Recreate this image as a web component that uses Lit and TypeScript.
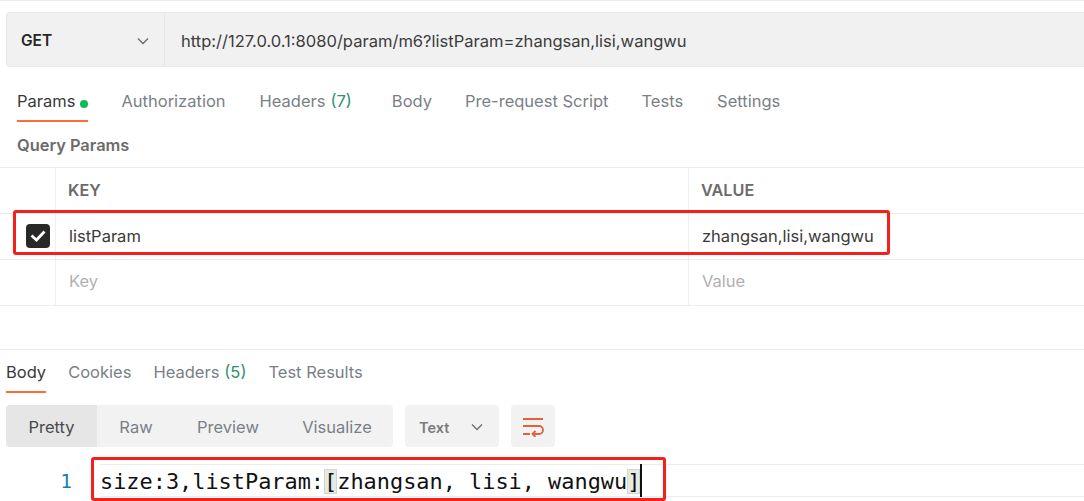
import { LitElement, html, css } from "lit";
import { customElement } from "lit/decorators.js";

const chevron = html`<svg class="chev" width="14" height="14" viewBox="0 0 14 14" fill="none"><path d="M2 4.5 7 9.5 12 4.5" stroke="#6b6b6b" stroke-width="1.3"/></svg>`;

@customElement("app-root")
export class AppRoot extends LitElement {
  static styles = css`
    :host { display: block; width: 1084px; height: 501px; overflow: hidden; background: #fff; font-family: Inter, "Liberation Sans", sans-serif; color: #3a3a3a; position: relative; }
    .top { border-top: 1px solid #ececec; padding: 11px 0 0 6px; }
    .urlbar { height: 55px; box-sizing: border-box; display: flex; align-items: center; background: #f1f1f1; border: 1px solid #e8e8e8; border-right: 0; border-radius: 4px 0 0 4px; }
    .method { width: 158px; height: 100%; box-sizing: border-box; border-right: 1px solid #e6e6e6; display: flex; align-items: center; justify-content: space-between; padding: 2px 14px 0 14px; font-weight: 600; font-size: 15.5px; color: #262626; }
    .url { padding: 2px 0 0 16px; font-size: 16.55px; color: #3c3c3c; white-space: nowrap; }
    .tabs { display: flex; font-size: 16.5px; color: #7a7f86; }
    .reqtabs { padding: 22px 0 0 17px; height: 33px; gap: 33px; }
    .tab { white-space: nowrap; display: flex; gap: 5px; height: 33px; line-height: 24px; box-sizing: border-box; }
    .tab.on { color: #3a3a3a; border-bottom: 2px solid #ff6c37; }
    .reqtabs .auth { margin-right: 1px; }
    .reqtabs .hdr { margin-right: 7px; }
    .reqtabs .tests { margin-right: 1px; }
    .dot { width: 8px; height: 8px; border-radius: 50%; background: #0cbb52; align-self: center; margin-bottom: 1px; }
    .count { color: #2f8f6f; }
    .qp { padding: 11px 0 0 17px; height: 45px; box-sizing: border-box; line-height: 24px; font-size: 16.4px; font-weight: 600; color: #6b6b6b; }
    .row { display: grid; grid-template-columns: 55px 633px 1fr; height: 46px; border-top: 1px solid #ececec; box-sizing: border-box; align-items: center; font-size: 16.5px; }
    .row > div { height: 100%; display: flex; align-items: center; box-sizing: border-box; padding-bottom: 2px; }
    .row > div + div { border-left: 1px solid #efefef; padding-left: 13px; }
    .row.h { font-weight: 600; color: #6b6b6b; font-size: 16.2px; }
    .row.h > div + div { padding-left: 12px; }
    .row.last { height: 47px; border-bottom: 1px solid #ececec; }
    .row.last > div { padding-bottom: 4px; }
    .ph { color: #b0b0b0; }
    .check { width: 24px; height: 24px; margin-left: 26px; border-radius: 4px; background: #282828; display: flex; align-items: center; justify-content: center; }
    .res { margin-top: 43px; border-top: 1px solid #ececec; }
    .restabs { padding: 10px 0 0 6px; gap: 22px; height: 33px; }
    .tools { display: flex; padding: 12px 0 0 6px; height: 42px; }
    .seg { width: 387px; height: 42px; background: #f2f2f2; border-radius: 4px; display: flex; overflow: hidden; font-size: 16.5px; color: #7a7f86; }
    .seg div { display: flex; align-items: center; justify-content: center; padding-top: 2px; box-sizing: border-box; }
    .seg .p { width: 91px; background: #e6e6e6; color: #4a4a4a; }
    .seg .r { width: 78px; }
    .seg .v { width: 106px; }
    .seg .z { width: 112px; }
    .fmt { margin-left: 12px; width: 94px; height: 42px; box-sizing: border-box; padding: 2px 15px 0 14px; background: #f2f2f2; border-radius: 4px; display: flex; align-items: center; justify-content: space-between; font-size: 14.5px; font-weight: 600; color: #7a7a7a; }
    .wrap { margin-left: 12px; width: 44px; height: 42px; background: #f2f2f2; border-radius: 4px; display: flex; align-items: center; justify-content: center; }
    .code { display: flex; align-items: center; margin-top: 17px; height: 33px; font-family: "DejaVu Sans Mono", "Liberation Mono", monospace; font-size: 21.9px; color: #111; }
    .ln { width: 72px; text-align: right; color: #1d7fa6; font-size: 19.5px; font-family: "DejaVu Sans Mono", monospace; padding-top: 2px; }
    .line { margin-left: 28px; flex: 1; height: 33px; box-sizing: border-box; border-top: 1px solid #ececec; border-bottom: 1px solid #ececec; display: flex; align-items: center; white-space: pre; line-height: 31px; }
    .txt { position: relative; top: 1px; }
    .br { background: #e3ebe3; outline: 1px solid #cfd8cf; outline-offset: -1px; }
    .caret { display: inline-block; width: 2px; height: 33px; background: #111; }
    .red { position: absolute; box-sizing: border-box; border: 3px solid #f5201a; border-radius: 3px; pointer-events: none; }
    .r1 { left: 13px; top: 210px; width: 877px; height: 45px; }
    .r2 { left: 91px; top: 457px; width: 575px; height: 44px; }
  `;
  render() {
    return html`
      <div class="top">
        <div class="urlbar">
          <div class="method">GET ${chevron}</div>
          <div class="url">http://127.0.0.1:8080/param/m6?listParam=zhangsan,lisi,wangwu</div>
        </div>
      </div>
      <div class="tabs reqtabs">
        <div class="tab on">Params <span class="dot"></span></div>
        <div class="tab auth">Authorization</div>
        <div class="tab hdr">Headers <span class="count">(7)</span></div>
        <div class="tab">Body</div>
        <div class="tab">Pre-request Script</div>
        <div class="tab tests">Tests</div>
        <div class="tab">Settings</div>
      </div>
      <div class="qp">Query Params</div>
      <div class="row h"><div></div><div>KEY</div><div>VALUE</div></div>
      <div class="row"><div><span class="check"><svg width="16" height="14" viewBox="0 0 16 14" fill="none"><path d="M1.5 6.5 6.5 11 14.5 2.5" stroke="#fff" stroke-width="2.8"/></svg></span></div><div>listParam</div><div>zhangsan,lisi,wangwu</div></div>
      <div class="row last"><div></div><div class="ph">Key</div><div class="ph">Value</div></div>
      <div class="res">
        <div class="tabs restabs">
          <div class="tab on">Body</div>
          <div class="tab">Cookies</div>
          <div class="tab">Headers <span class="count">(5)</span></div>
          <div class="tab">Test Results</div>
        </div>
        <div class="tools">
          <div class="seg"><div class="p">Pretty</div><div class="r">Raw</div><div class="v">Preview</div><div class="z">Visualize</div></div>
          <div class="fmt">Text ${chevron}</div>
          <div class="wrap"><svg width="22" height="22" viewBox="0 0 22 22" fill="none" stroke="#e0623a" stroke-width="1.8"><path d="M1 4H21M1 11H17A4 4 0 0 1 17 19H11M1 19H8M13.5 16 10.5 19 13.5 22"/></svg></div>
        </div>
        <div class="code">
          <span class="ln">1</span>
          <div class="line"><span class="txt">size:3,listParam:<span class="br">[</span>zhangsan, lisi, wangwu<span class="br">]</span></span><span class="caret"></span></div>
        </div>
      </div>
      <div class="red r1"></div>
      <div class="red r2"></div>
    `;
  }
}
